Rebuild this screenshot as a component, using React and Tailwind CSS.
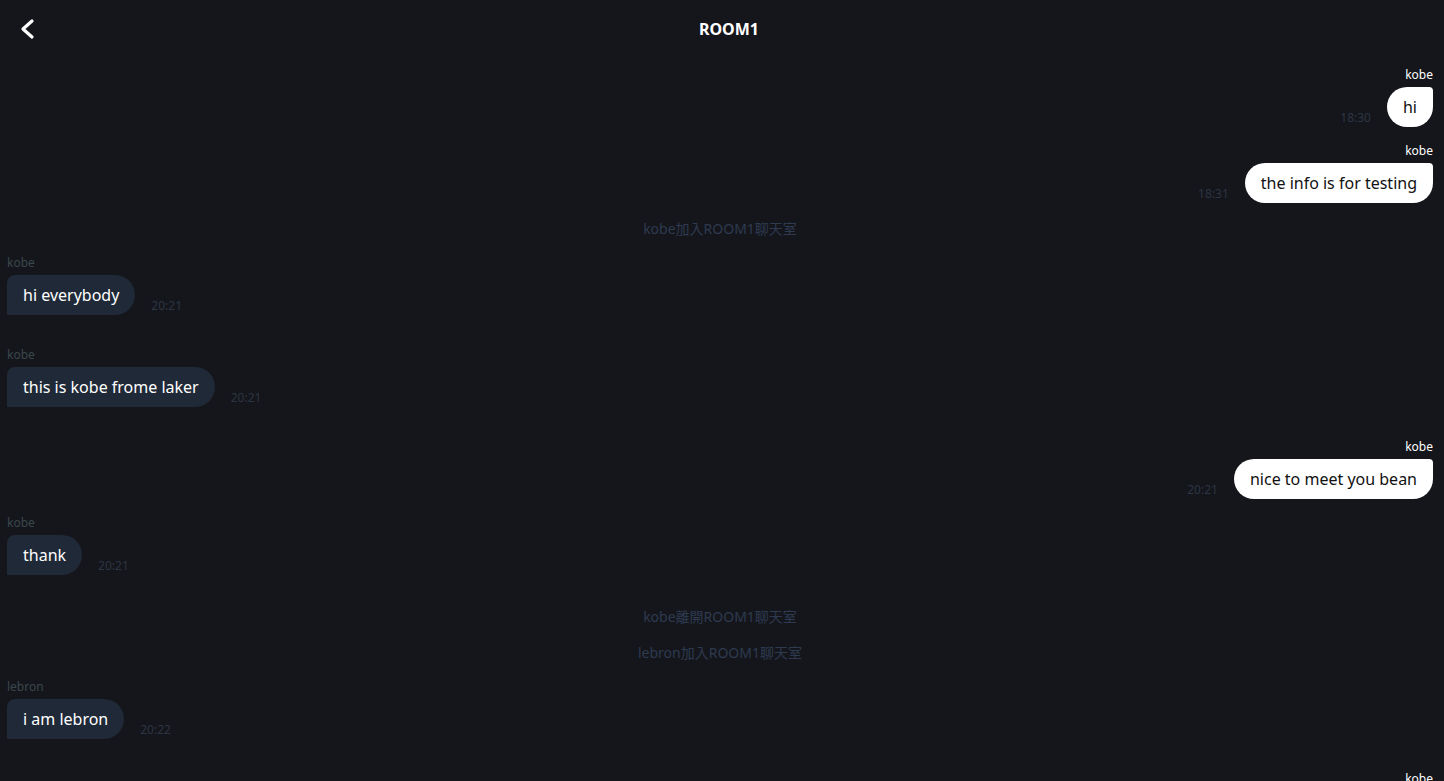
import React from 'react';

const messages = [
  { type: 'me', name: 'kobe', text: 'hi', time: '18:30' },
  { type: 'me', name: 'kobe', text: 'the info is for testing', time: '18:31' },
  { type: 'system', text: 'kobe加入ROOM1聊天室' },
  { type: 'other', name: 'kobe', text: 'hi everybody', time: '20:21' },
  { type: 'other', name: 'kobe', text: 'this is kobe frome laker', time: '20:21' },
  { type: 'me', name: 'kobe', text: 'nice to meet you bean', time: '20:21' },
  { type: 'other', name: 'kobe', text: 'thank', time: '20:21' },
  { type: 'system', text: 'kobe離開ROOM1聊天室' },
  { type: 'system', text: 'lebron加入ROOM1聊天室' },
  { type: 'other', name: 'lebron', text: 'i am lebron', time: '20:22' },
  { type: 'me', name: 'kobe', text: 'see you', time: '20:22' },
];

const MyMessage = ({ msg }) => (
  <div className="flex flex-col items-end">
    <span className="text-[12px] leading-4 text-white mb-1">{msg.name}</span>
    <div className="flex items-end gap-4">
      <span className="text-[12px] leading-[14px] text-[#2c3544] mb-[2px]">{msg.time}</span>
      <div className="h-10 flex items-center px-4 bg-white text-[#111] text-[16px] rounded-[20px] rounded-tr-[4px]">
        {msg.text}
      </div>
    </div>
  </div>
);

const OtherMessage = ({ msg }) => (
  <div className="flex flex-col items-start pb-4">
    <span className="text-[12px] leading-4 text-[#3a474d] mb-1">{msg.name}</span>
    <div className="flex items-end gap-4">
      <div className="h-10 flex items-center px-4 bg-[#1f2937] text-white text-[16px] rounded-r-[20px] rounded-tl-[8px] rounded-bl-none">
        {msg.text}
      </div>
      <span className="text-[12px] leading-[14px] text-[#2c3544] mb-[2px]">{msg.time}</span>
    </div>
  </div>
);

const App = () => {
  return (
    <div
      className="h-screen w-screen overflow-hidden flex flex-col bg-[#15161b]"
      style={{ fontFamily: '"Noto Sans", "Noto Sans CJK TC", sans-serif' }}
    >
      <header className="h-[58px] shrink-0 flex items-center relative">
        <svg width="40" height="58" viewBox="0 0 40 58" className="ml-2">
          <polyline
            points="24,21 15,29 24,37"
            fill="none"
            stroke="white"
            strokeWidth="3.2"
            strokeLinecap="round"
            strokeLinejoin="round"
          />
        </svg>
        <h1 className="absolute left-1/2 -translate-x-1/2 ml-[7px] text-white font-bold text-[16px]">ROOM1</h1>
      </header>
      <main className="flex-1 flex flex-col gap-4 pl-[7px] pr-[11px] pt-[9px]">
        {messages.map((msg, i) => {
          if (msg.type === 'system')
            return (
              <div key={i} className="text-center text-[14px] leading-5 text-[#2d3a50]">
                {msg.text}
              </div>
            );
          if (msg.type === 'me') return <MyMessage key={i} msg={msg} />;
          return <OtherMessage key={i} msg={msg} />;
        })}
      </main>
    </div>
  );
};

export default App;
